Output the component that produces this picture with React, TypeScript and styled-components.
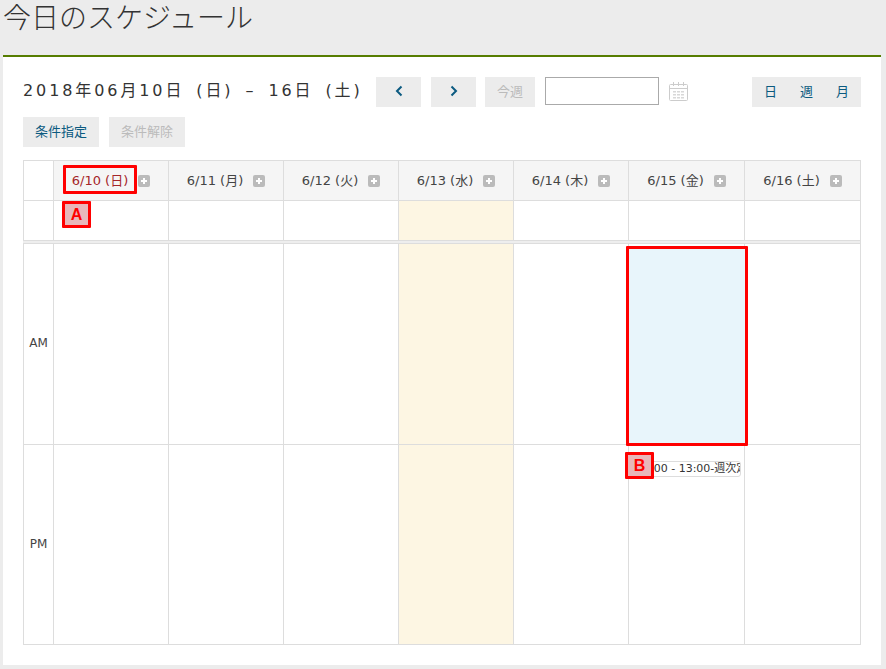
import React from 'react';
import styled, { createGlobalStyle } from 'styled-components';

const GlobalStyle = createGlobalStyle`
  html, body {
    margin: 0;
    padding: 0;
    height: 669px;
    overflow: hidden;
    background: #ececec;
    font-family: "DejaVu Sans", "Noto Sans CJK JP", sans-serif;
  }
  * {
    box-sizing: border-box;
  }
`;

const Page = styled.div`
  padding: 0 5px 4px 3px;
`;

const PageHeader = styled.div`
  height: 57px;
  border-bottom: 2px solid #567d00;
`;

const PageTitle = styled.h1`
  margin: 0;
  font-family: "Noto Sans CJK JP", sans-serif;
  font-size: 28px;
  font-weight: 300;
  line-height: 32px;
  color: #333;
  white-space: nowrap;
`;

const Panel = styled.div`
  height: 608px;
  padding: 20px 20px 0;
  background: #fff;
`;

const Toolbar = styled.div`
  display: flex;
  align-items: flex-start;
  height: 30px;
  margin-bottom: 10px;
`;

const DateRange = styled.div`
  width: 353px;
  font-size: 16px;
  line-height: 28px;
  letter-spacing: 2.9px;
  word-spacing: 4px;
  color: #333;
  white-space: nowrap;
`;

const Button = styled.button<{ $width: number; $gap?: number; $disabled?: boolean }>`
  width: ${(p) => p.$width}px;
  height: 30px;
  margin-right: ${(p) => p.$gap ?? 10}px;
  padding: 0 0 3px;
  border: 0;
  background: #ececec;
  font-family: inherit;
  font-size: 13px;
  color: ${(p) => (p.$disabled ? '#bbb' : '#0b5a80')};
  display: flex;
  align-items: center;
  justify-content: center;
`;

const DateInput = styled.input`
  width: 114px;
  height: 28px;
  margin-right: 10px;
  border: 1px solid #aaa;
  background: #fff;
`;

const CalendarIcon = styled.svg`
  width: 20px;
  height: 20px;
  margin-top: 5px;
`;

const ViewSwitch = styled.div`
  display: flex;
  align-items: center;
  justify-content: space-between;
  width: 109px;
  height: 30px;
  margin-left: auto;
  padding: 0 12px 3px;
  background: #ececec;
  font-size: 13px;
  color: #0b5a80;
`;

const Grid = styled.div`
  display: grid;
  grid-template-columns: 30px 115px 115px 115px 115px 115px 116px 116px;
  grid-template-rows: 40px 40px 3px 201px 200px;
  width: 838px;
  margin-top: 13px;
  border-right: 1px solid #ddd;
  border-bottom: 1px solid #ddd;
`;

const Cell = styled.div<{ $today?: boolean }>`
  position: relative;
  border-left: 1px solid #ddd;
  border-top: 1px solid #ddd;
  background: ${(p) => (p.$today ? '#fdf6e3' : '#fff')};
`;

const HeadCell = styled(Cell)`
  display: flex;
  align-items: center;
  justify-content: center;
  gap: 10px;
  background: #f5f5f5;
  font-size: 13px;
  color: #444;
`;

const CornerCell = styled(Cell)`
  background: #fff;
`;

const HeadLabel = styled.span<{ $sunday?: boolean }>`
  margin-bottom: 2px;
  color: ${(p) => (p.$sunday ? '#a5262a' : '#444')};
`;

const PlusIcon = styled.svg`
  width: 12px;
  height: 12px;
`;

const Separator = styled.div`
  grid-column: 1 / -1;
  border-top: 1px solid #ddd;
  background: #eee;
`;

const TimeCell = styled(Cell)`
  display: flex;
  align-items: center;
  justify-content: center;
  padding-bottom: 2px;
  font-size: 12px;
  color: #444;
`;

const EventChip = styled.div`
  position: absolute;
  top: 16px;
  left: 3px;
  right: 3px;
  height: 16px;
  padding: 0 3px;
  overflow: hidden;
  border: 1px solid #ddd;
  border-radius: 3px;
  background: #fff;
  font-size: 11px;
  line-height: 14px;
  color: #333;
  white-space: nowrap;
`;

const RedFrame = styled.div`
  position: absolute;
  z-index: 1;
  border: 3px solid #f00;
  border-radius: 1px;
`;

const DateFrame = styled(RedFrame)`
  top: 4px;
  left: 9px;
  width: 74px;
  height: 29px;
`;

const SlotFrame = styled(RedFrame)`
  top: 2px;
  left: -3px;
  width: 122px;
  height: 200px;
  background: #e8f5fb;
`;

const Marker = styled(RedFrame)`
  display: flex;
  align-items: center;
  justify-content: center;
  background: #e8b7ba;
  font-family: "Liberation Sans", sans-serif;
  font-size: 16px;
  font-weight: 700;
  color: #f00;
`;

const MarkerA = styled(Marker)`
  top: 0;
  left: 8px;
  width: 29px;
  height: 27px;
`;

const MarkerB = styled(Marker)`
  top: 7px;
  left: -4px;
  width: 29px;
  height: 27px;
`;

const days = [
  '6/10 (日)',
  '6/11 (月)',
  '6/12 (火)',
  '6/13 (水)',
  '6/14 (木)',
  '6/15 (金)',
  '6/16 (土)',
];

const TODAY = 3;
const FRIDAY = 5;

const Plus = () => (
  <PlusIcon viewBox="0 0 12 12">
    <rect width="12" height="12" rx="2" fill="#bbb" />
    <path d="M6 3v6M3 6h6" stroke="#fff" strokeWidth="2" />
  </PlusIcon>
);

const Calendar = () => (
  <CalendarIcon viewBox="0 0 20 20" fill="none">
    <rect x="0.5" y="2.5" width="18" height="16" rx="1" stroke="#ccc" />
    <path d="M0.5 6.5h18M4.5 0v4M9.5 0v4M14.5 0v4" stroke="#ccc" />
    <path
      d="M4 9h3v1.5H4zM8 9h3v1.5H8zM12 9h3v1.5h-3zM4 12h3v1.5H4zM8 12h3v1.5H8zM12 12h3v1.5h-3zM4 15h3v1.5H4zM8 15h3v1.5H8zM12 15h3v1.5h-3z"
      fill="#d8d8d8"
    />
  </CalendarIcon>
);

const Chevron = ({ right }: { right?: boolean }) => (
  <svg width="8" height="12" viewBox="0 0 8 12" fill="none">
    <path
      d={right ? 'M1.5 1.5 6 6l-4.5 4.5' : 'M6.5 1.5 2 6l4.5 4.5'}
      stroke="#0b5a80"
      strokeWidth="2"
    />
  </svg>
);

function App() {
  return (
    <Page>
      <GlobalStyle />
      <PageHeader>
        <PageTitle>今日のスケジュール</PageTitle>
      </PageHeader>
      <Panel>
        <Toolbar>
          <DateRange>2018年06月10日 (日) – 16日 (土)</DateRange>
          <Button $width={45}>
            <Chevron />
          </Button>
          <Button $width={45} $gap={9}>
            <Chevron right />
          </Button>
          <Button $width={50} $disabled>
            今週
          </Button>
          <DateInput />
          <Calendar />
          <ViewSwitch>
            <span>日</span>
            <span>週</span>
            <span>月</span>
          </ViewSwitch>
        </Toolbar>
        <Toolbar>
          <Button $width={76}>条件指定</Button>
          <Button $width={76} $disabled>
            条件解除
          </Button>
        </Toolbar>
        <Grid>
          <CornerCell />
          {days.map((day, index) => (
            <HeadCell key={day}>
              <HeadLabel $sunday={index === 0}>{day}</HeadLabel>
              <Plus />
              {index === 0 && <DateFrame />}
            </HeadCell>
          ))}
          <Cell />
          {days.map((day, index) => (
            <Cell key={day} $today={index === TODAY}>
              {index === 0 && <MarkerA>A</MarkerA>}
            </Cell>
          ))}
          <Separator />
          <TimeCell>AM</TimeCell>
          {days.map((day, index) => (
            <Cell key={day} $today={index === TODAY}>
              {index === FRIDAY && <SlotFrame />}
            </Cell>
          ))}
          <TimeCell>PM</TimeCell>
          {days.map((day, index) => (
            <Cell key={day} $today={index === TODAY}>
              {index === FRIDAY && (
                <>
                  <EventChip>10:00 - 13:00-週次定例</EventChip>
                  <MarkerB>B</MarkerB>
                </>
              )}
            </Cell>
          ))}
        </Grid>
      </Panel>
    </Page>
  );
}

export default App;
